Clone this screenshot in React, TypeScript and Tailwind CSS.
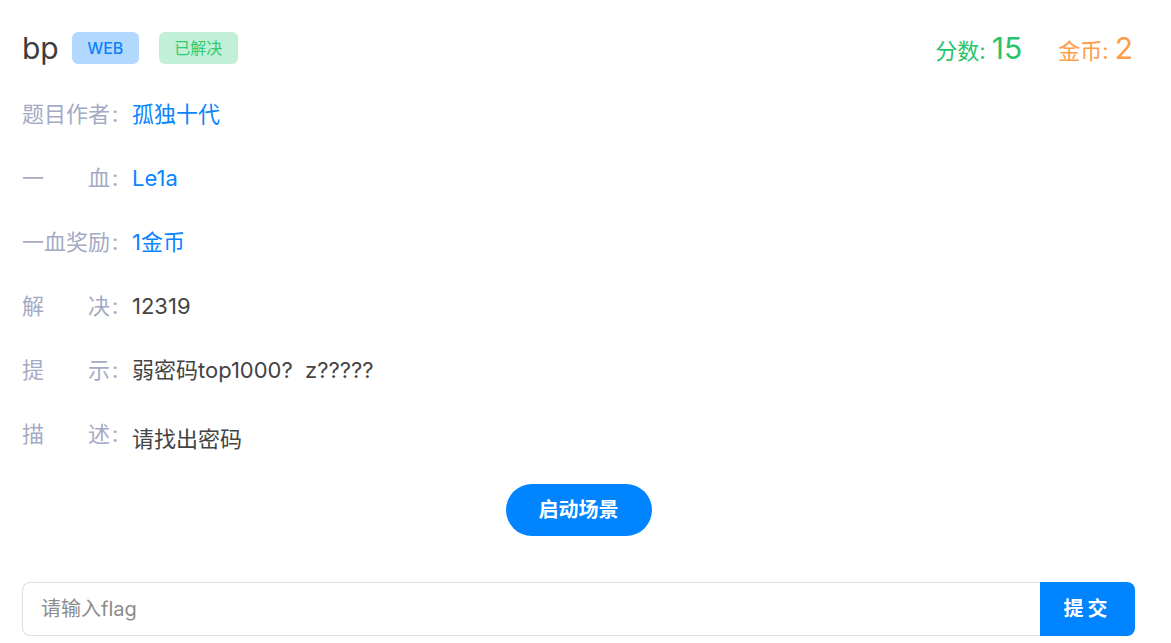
import { useState } from "react"

const rows = [
  { label: ["题", "目", "作", "者"], value: "孤独十代", blue: true },
  { label: ["一", "血"], value: "Le1a", blue: true },
  { label: ["一", "血", "奖", "励"], value: "1金币", blue: true },
  { label: ["解", "决"], value: "12319" },
  { label: ["提", "示"], value: "弱密码top1000?  z?????" },
]

function Label({ chars }: { chars: string[] }) {
  return (
    <div className="flex w-[110px] shrink-0 text-[#a5aac4]">
      <div className="flex w-[88px] justify-between">
        {chars.map((c, i) => (
          <span key={i}>{c}</span>
        ))}
      </div>
      <span className="pl-[2px]">:</span>
    </div>
  )
}

export default function App() {
  const [flag, setFlag] = useState("")

  return (
    <main
      className="min-h-screen bg-white pl-[22px] pr-[36px] pt-4 text-[22px] text-[#444]"
      style={{ fontFamily: 'Inter, "Noto Sans CJK SC", sans-serif' }}
    >
      <div className="flex h-16 items-center justify-between">
        <div className="flex items-center">
          <h1 className="text-[30px] leading-none text-[#3d3d3d]">bp</h1>
          <span className="ml-[13px] flex h-8 w-[67px] items-center justify-center rounded-md bg-[#b3d8ff] text-[16px] font-medium text-[#0a84ff]">
            WEB
          </span>
          <span className="ml-5 flex h-8 w-[79px] items-center justify-center rounded-md bg-[#c2efd7] text-[16px] text-[#2ecc71]">
            已解决
          </span>
        </div>
        <div className="flex items-baseline gap-9 pr-[2px]">
          <div className="text-[#27c46c]">
            分数: <span className="text-[30px]">15</span>
          </div>
          <div className="text-[#ff9c45]">
            金币: <span className="text-[30px]">2</span>
          </div>
        </div>
      </div>

      <div className="mt-0.5">
        {rows.map((r, i) => (
          <div key={i} className="flex h-16 items-center">
            <Label chars={r.label} />
            <span className={`whitespace-pre ${r.blue ? "text-[#0a84ff]" : ""}`}>{r.value}</span>
          </div>
        ))}
        <div className="flex h-16 items-center">
          <Label chars={["描", "述"]} />
          <span className="pt-[10px]">请找出密码</span>
        </div>
      </div>

      <div className="mt-[18px] flex justify-center">
        <button className="h-[52px] w-[146px] rounded-full bg-[#0084ff] text-[20px] font-bold text-white">
          启动场景
        </button>
      </div>

      <div className="mt-[46px] flex h-[54px]">
        <input
          value={flag}
          onChange={(e) => setFlag(e.target.value)}
          placeholder="请输入flag"
          className="min-w-0 flex-1 rounded-l-lg border border-r-0 border-[#dcdfe6] px-[18px] text-[20px] text-[#444] outline-none placeholder:text-[#8c8c8c]"
        />
        <button className="w-[95px] rounded-r-lg bg-[#0084ff] text-[20px] font-bold tracking-[4px] text-white">
          提交
        </button>
      </div>
    </main>
  )
}
